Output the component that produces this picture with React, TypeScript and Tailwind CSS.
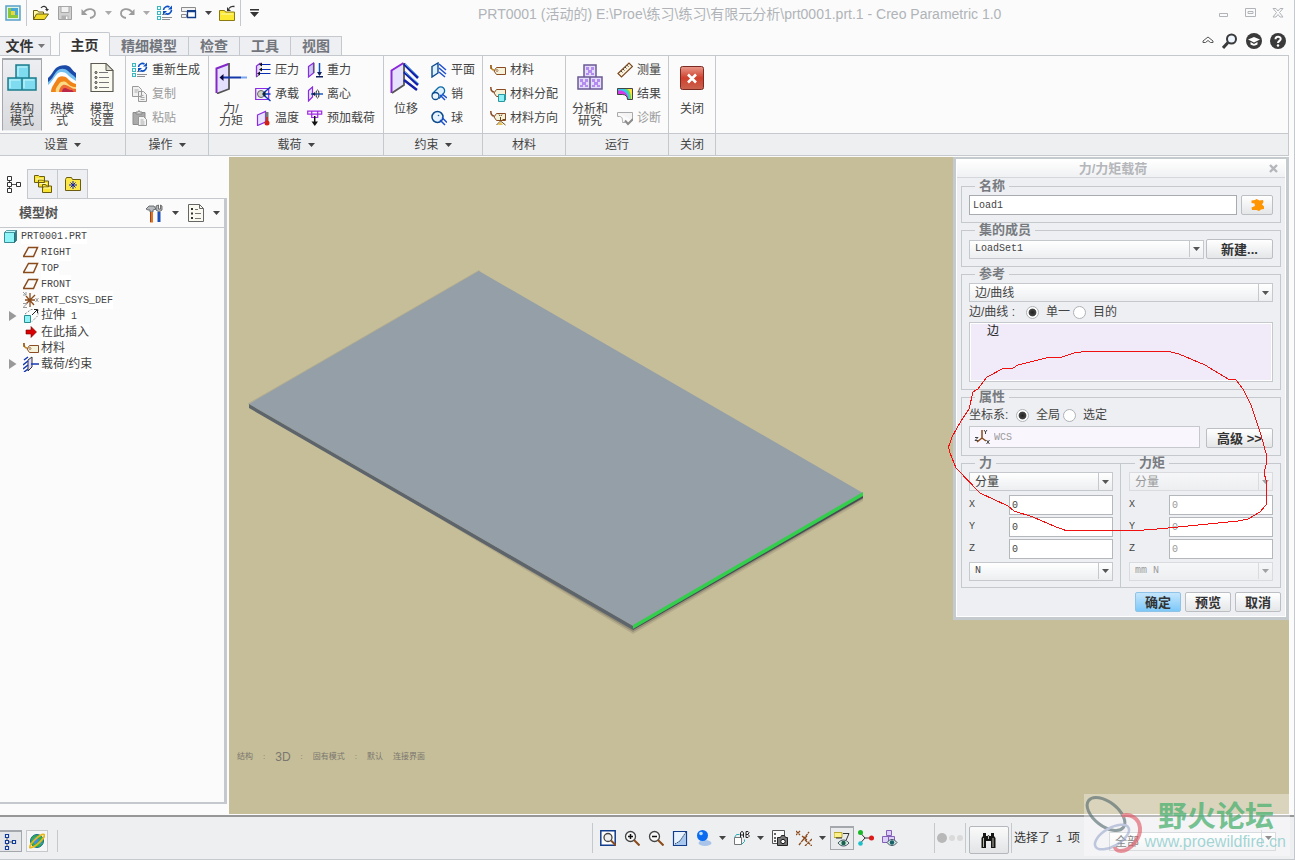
import type { ReactNode } from 'react';

type Kids = { children: ReactNode };

const LINE = 'border-[#c5c9cd]';

function Ico({ s = 16, v, children }: { s?: number; v?: number; children: ReactNode }) {
  const box = v ?? s;
  return (
    <svg width={s} height={s} viewBox={`0 0 ${box} ${box}`} fill="none" className="shrink-0" aria-hidden="true">
      {children}
    </svg>
  );
}

function Caret({ color = '#444' }: { color?: string }) {
  return (
    <svg width="7" height="4" viewBox="0 0 7 4" className="shrink-0" aria-hidden="true">
      <path d="M0 0h7L3.5 4z" fill={color} />
    </svg>
  );
}

/* ---------- shared small icons ---------- */

const Regen = () => (
  <Ico>
    <g shapeRendering="crispEdges">
      <path d="M.5 1.500h3v3h-3zM.5 6.500h3v3h-3zM.5 11.500h3v3h-3z" stroke="#3fb6bd" fill="#dff" />
      <path d="M5 9.500h4M5 12.500h10M5 14.500h8" stroke="#8b8f93" />
    </g>
    <path d="M6.500 5a4 4 0 0 1 6-3M14.500 5a4 4 0 0 1-6 3.500" stroke="#0a4fc4" strokeWidth="1.600" />
    <path d="M11 4.500h4V.5zM10 6H6v4z" fill="#0a4fc4" />
  </Ico>
);
const Copy = () => (
  <Ico>
    <path d="M.5.5h6l3 3v7h-9zM6.500 5.500h5l3 3v7h-8z" fill="#f1f1f1" stroke="#999" />
    <path d="M2.500 4h4M2.500 6h3M8.500 9.500h3M8.500 11.500h4M8.500 13.500h4" stroke="#aaa" />
  </Ico>
);
const Paste = () => (
  <Ico>
    <path d="M1 2.500h12v12H1z" fill="#aaa" stroke="#8d8d8d" />
    <path d="M4 4V2h2l1-1.500L8 2h2v2z" fill="#ddd" stroke="#888" />
    <path d="M6.500 6.500h5l3 3v6h-8z" fill="#f4f4f4" stroke="#999" />
    <path d="M8.500 10h3M8.500 12h4M8.500 14h4" stroke="#aaa" />
  </Ico>
);
const Tag = () => (
  <Ico>
    <path d="M.8 3c0 3 .8 5 3.500 5" stroke="#c08a1c" strokeWidth="1.500" />
    <path d="M1 3v4" stroke="#7a3b12" />
    <path d="M6.500 5.500h9v7h-9L4 9z" fill="#f5f2dc" stroke="#8a4b22" />
    <circle cx="7" cy="8.500" r="1" fill="#fff" stroke="#8a4b22" strokeWidth=".7" />
  </Ico>
);
const TagAssign = () => (
  <Ico>
    <path d="M.8 1c0 3 .8 5 3.500 5" stroke="#8a4b22" strokeWidth="1.500" />
    <path d="M6.500 3.500h9v7h-9L4 7z" fill="#f5f2dc" stroke="#8a4b22" />
    <path d="M8.500 8.500h6v7h-6z" fill="#8ff0f5" stroke="#2b98a0" />
    <path d="M14.500 8.500l1.500-1v6l-1.500 2z" fill="#2b98a0" />
  </Ico>
);
const TagOrient = () => (
  <Ico>
    <path d="M.8 1c0 3 .8 5 3.500 5" stroke="#8a4b22" strokeWidth="1.500" />
    <path d="M6.500 3.500h9v7h-9L4 7z" fill="#f5f2dc" stroke="#8a4b22" />
    <path d="M10.500 11V7M10.500 11l-4 4M10.500 11l5 4M10 6l-1-1.500M11 6l1-1.500M12.500 9.500l3 0" stroke="#6b4a1c" />
    <path d="M10 11.500l3 3.500H8z" fill="#e6c350" />
  </Ico>
);
const Pressure = () => (
  <Ico>
    <path d="M2 4.500L5.500 1v10.500L2 15z" fill="#e3dcff" />
    <path d="M1.500 15V4L5.500 1" stroke="#8a2be2" strokeWidth="1.300" />
    <path d="M1.500 15l4-3.500" stroke="#555" />
    <path d="M5 2.500h10.500M5 7.500h10.500M3 11.500h12.500" stroke="#0a2bb4" strokeWidth="1.200" />
    <path d="M4 2.500l3-2v4zM4 7.500l3-2v4zM2 11.500l3-2v4z" fill="#111" />
  </Ico>
);
const Bearing = () => (
  <Ico>
    <path d="M.7 2.500h13v11H.7z" fill="#f2edff" stroke="#8a2be2" strokeWidth="1.200" />
    <circle cx="6" cy="8" r="3.500" fill="#cfd3c4" stroke="#666" />
    <path d="M15.500 1L8 7.500M15.500 8H8M15.500 15L8 8.500" stroke="#0a3cc4" strokeWidth="1.400" />
    <path d="M7 8l3.500-3v6z" fill="#123" />
  </Ico>
);
const Temp = () => (
  <Ico>
    <path d="M2.500 5l8-3.500V12l-8 3.500z" fill="#e8e3ff" stroke="#8a2be2" strokeWidth="1.200" />
    <path d="M12 2v10" stroke="#777" strokeWidth="3" />
    <path d="M12 7v5" stroke="#d42010" strokeWidth="1.500" />
    <circle cx="12" cy="13" r="2.500" fill="#d42010" />
  </Ico>
);
const Gravity = () => (
  <Ico>
    <path d="M1.500 4.500l5-3.500v10l-5 4z" fill="#c9c9ee" stroke="#8a2be2" strokeWidth="1.200" />
    <path d="M7 1v10" stroke="#555" />
    <path d="M12.500 1v12" stroke="#0a4fc4" strokeWidth="1.500" />
    <path d="M10 10h5l-2.500 4zM9 14h7v1.500H9z" fill="#102060" />
  </Ico>
);
const Centrifugal = () => (
  <Ico>
    <path d="M1.500 4.500L5.500 1v10l-4 4z" fill="#e8e3ff" stroke="#8a2be2" strokeWidth="1.200" />
    <path d="M4 8h12" stroke="#0a4fc4" strokeWidth="1.400" />
    <ellipse cx="10.500" cy="8" rx="1.500" ry="4" stroke="#333" />
    <path d="M5 8l3-2v4z" fill="#123" />
  </Ico>
);
const Preload = () => (
  <Ico>
    <path d="M.7 1.200h14v3H.7zM4.700 4.500v3h6v-3M4.700 1v3M10.700 1v3" stroke="#a02be2" strokeWidth="1.200" fill="#f7eeff" />
    <path d="M7.700 6v6" stroke="#111" strokeWidth="1.500" />
    <path d="M4.500 11.500h6.500l-3.200 4.500z" fill="#111" />
  </Ico>
);
const hatch = <path d="M8 2l7 6M8 6l7 6M8 10l6 5" stroke="#1d4fd0" strokeWidth="1.500" />;
const Plane = () => (
  <Ico>
    <path d="M1 4.500L7 1v10l-6 4z" fill="#dff0ff" stroke="#0d4a8c" strokeWidth="1.400" />
    {hatch}
  </Ico>
);
const Pin = () => (
  <Ico>
    <path d="M1 8l6-6a3.800 3.800 0 1 1 5.500 5.500L8 12.500" fill="#dff0ff" stroke="#0d6aa8" strokeWidth="1.300" />
    <circle cx="4.500" cy="10" r="3.500" fill="#eef7ff" stroke="#0d4a8c" strokeWidth="1.300" />
    <path d="M9 9l5 5M11 8l5 4" stroke="#1d4fd0" strokeWidth="1.500" />
  </Ico>
);
const Ball = () => (
  <Ico>
    <circle cx="6.500" cy="7" r="5.500" fill="#e6f3ff" stroke="#0d4a8c" strokeWidth="1.500" />
    <circle cx="7.500" cy="5.500" r=".8" fill="#0d6aa8" />
    <path d="M9 10l5 5M11 7.500l5 5" stroke="#1d4fd0" strokeWidth="1.500" />
  </Ico>
);
const Ruler = () => (
  <Ico>
    <path d="M1 11.500L12 1l3.500 3.500L4.500 15z" fill="#fbf3dc" stroke="#7a4a22" strokeWidth="1.200" />
    <path d="M4 9l1.500 1.500M6 7l1.500 1.500M8 5l1.500 1.500M10 3.200l1.500 1.500" stroke="#444" />
  </Ico>
);
const Result = () => (
  <Ico>
    <path d="M.5 2.500h15v11h-5c0-3-2-5-5-5h-5z" fill="#ffe23a" />
    <path d="M.5 2.500h8c4 1 6 5 5.500 11h-3.500c0-3-2-5-5-5h-5z" fill="#5be06a" />
    <path d="M.5 2.500h5c5 1 7 5 7 11h-2c0-3-2-5-5-5h-5z" fill="#39c6ef" />
    <path d="M.5 4.500h4c4 1 6.500 4 7 9h-1c0-3-2-5-5-5h-5z" fill="#d43ae8" />
    <path d="M.5 2.500h15v11h-5c0-3-2-5-5-5h-5z" stroke="#444" />
  </Ico>
);
const Diagnose = () => (
  <Ico>
    <path d="M.5 2.500h15v8M.5 2.500v4h2c3 0 3 3 3 6h3" fill="#f4f4f4" stroke="#aaa" />
    <path d="M8 10.500l3 3.500 5-5" stroke="#8b8b8b" strokeWidth="2" />
  </Ico>
);

/* ---------- large ribbon icons ---------- */

const Blocks = () => (
  <Ico s={32}>
    <g fill="#7fdcf0" stroke="#1c7c8c" strokeWidth="1.500">
      <path d="M10 3h13v13H10zM2 16h14v12H2zM16 16h14v12H16z" />
    </g>
    <path d="M12 14V5h9M4 26v-8h10M18 26v-8h10" stroke="#c9f5fc" strokeWidth="1.200" />
  </Ico>
);
const Thermal = () => (
  <Ico s={32}>
    <path d="M2 16c3-2 5-7 8-10s11-4 14-1 3 4 6 6v19H2z" fill="#1c4aa8" />
    <path d="M2 20c4-2 6-8 9-11s8-3 11 0 5 4 8 7v14H2z" fill="#74c0ee" />
    <path d="M2 23c4-3 6-8 9-11s8-2 10 0 5 5 9 7v11H2z" fill="#fdfdfd" />
    <path d="M5 30c0-5 4-9 6-13s8-3 10-1 5 5 9 6v8z" fill="#f08418" />
    <path d="M10 30c-1-3 1-5 3-8s6-3 8-1 4 4 9 4v5z" fill="#fbdc84" />
    <path d="M13 30c0-3 2-6 4-7s5 1 7 2 3 2 6 2v3z" fill="#ee6c34" />
    <path d="M16 30c0-2 1-4 3-4s3 2 7 2l2 2z" fill="#bc2848" />
  </Ico>
);
const Sheet = () => (
  <Ico s={32}>
    <path d="M5 1.500h15l7 7v21H5z" fill="#fbfaf0" stroke="#5c5a50" strokeWidth="1.200" />
    <path d="M20 1.500v7h7z" fill="#dcdcd0" stroke="#5c5a50" />
    <g stroke="#333">
      <circle cx="10" cy="10.500" r="1" /><circle cx="10" cy="15.500" r="1" /><circle cx="10" cy="20.500" r="1" /><circle cx="10" cy="25.500" r="1" />
    </g>
    <path d="M13 10.500h9M13 15.500h10M13 20.500h10M13 25.500h10" stroke="#777" />
  </Ico>
);
const Force = () => (
  <Ico s={32}>
    <path d="M1.500 6.500l12-4.500v25l-12 5z" fill="#e6e0ff" />
    <path d="M1.500 31V6.500L13.500 2" stroke="#8428c8" strokeWidth="2" />
    <path d="M14 1v26L2 31.500" stroke="#555" strokeWidth="1.800" />
    <path d="M6 15.500h20" stroke="#1438a8" strokeWidth="2" />
    <path d="M26 15.500h6" stroke="#7aa8f0" strokeWidth="2" />
    <path d="M4.500 15.500l4-3.500v7z" fill="#0a0a40" />
  </Ico>
);
const Displace = () => (
  <Ico s={32}>
    <path d="M1.500 8.500l12-7.500v22l-12 8z" fill="#e6e0ff" />
    <path d="M1.500 31V8.500l12-7.500" stroke="#8a28d8" strokeWidth="2" />
    <path d="M14 1v22L2 31" stroke="#555" strokeWidth="1.800" />
    <path d="M14 2l14 14M14 10l14 13M14 18l13 10" stroke="#1420a8" strokeWidth="2.500" />
    <path d="M15 2l14 13M15 10l14 12" stroke="#5ab0f0" />
  </Ico>
);
const Study = () => (
  <Ico s={32}>
    <g fill="#e4dcfc" stroke="#6b5a94" strokeWidth="1.500">
      <path d="M10 3h12v12H10zM4 15h12v12H4zM16 15h12v12H16z" />
    </g>
    <g fill="#b48cf0">
      <path d="M12 5h3v3h-3zM17 5h3v3h-3zM14 8h4v3h-4zM12 11h3v2h-3zM17 11h3v2h-3zM6 17h3v3H6zM11 17h3v3h-3zM8 20h4v3H8zM6 23h3v2H6zM11 23h3v2h-3zM18 17h3v3h-3zM23 17h3v3h-3zM20 20h4v3h-4zM18 23h3v2h-3zM23 23h3v2h-3z" />
    </g>
  </Ico>
);
const CloseBig = () => (
  <Ico s={32}>
    <defs>
      <linearGradient id="closeRed" x1="0" y1="0" x2="0" y2="1">
        <stop offset="0" stopColor="#e89a8c" /><stop offset=".5" stopColor="#d0402c" /><stop offset="1" stopColor="#c86450" />
      </linearGradient>
    </defs>
    <rect x="4.500" y="4.500" width="23" height="23" rx="2" fill="url(#closeRed)" stroke="#7a2a20" />
    <path d="M12 12.500l8 8M20 12.500l-8 8" stroke="#fff" strokeWidth="2.600" />
  </Ico>
);

/* ---------- ribbon pieces ---------- */

function Big({ icon, lines, pressed, w = 'w-10' }: { icon: ReactNode; lines: string[]; pressed?: boolean; w?: string }) {
  return (
    <button
      className={`flex h-[73px] flex-col items-center text-xs leading-3 ${w} ${
        pressed ? 'border border-t-2 border-[#a4a8ac] border-b-transparent bg-linear-to-b from-[#eceef1] to-[#d8dadd] pt-0.5' : 'pt-1'
      }`}
    >
      {icon}
      <span className="mt-[9px] block">
        {lines.map((l) => (
          <span key={l} className="block whitespace-nowrap">{l}</span>
        ))}
      </span>
    </button>
  );
}

function Small({ icon, text, off }: { icon: ReactNode; text: string; off?: boolean }) {
  return (
    <button disabled={off} className={`flex h-6 items-center gap-1 text-xs whitespace-nowrap ${off ? 'text-[#9a9a9a]' : ''}`}>
      {icon}
      {text}
    </button>
  );
}

const Col = ({ children }: Kids) => <div className="flex flex-col">{children}</div>;

function Group({ label, menu, w, children }: { label: string; menu?: boolean; w: string; children: ReactNode }) {
  return (
    <section className={`flex shrink-0 flex-col border-r ${LINE} ${w}`}>
      <div className="flex h-[77px] items-start pt-0.5">{children}</div>
      <div className={`flex h-[22px] items-center justify-center gap-1.5 border-t ${LINE} bg-[#eeeff1] text-xs`}>
        {label}
        {menu && <Caret />}
      </div>
    </section>
  );
}

function QuickBar() {
  const slot = 'flex w-6 shrink-0 items-center justify-center';
  const drop = 'flex w-3.5 shrink-0 items-center justify-center';
  return (
    <div className="flex h-[26px] items-stretch">
      <div className={`mr-0.5 flex w-[27px] items-center justify-center border-r ${LINE}`}>
        <Ico>
          <path d="M1 1h14v14H1z" fill="#dff4e4" stroke="#5aa0c8" strokeWidth="1.500" />
          <path d="M3 3h3v7h7v3H3z" fill="#8cc63c" />
          <path d="M6 3h7v7H6z" fill="#4aa8d8" />
          <path d="M6 6h4v4H6z" fill="#e8d83c" />
        </Ico>
      </div>
      <button className={slot} aria-label="打开">
        <Ico>
          <path d="M.5 14.500v-9h4l1 1.500h5v2" fill="#fff9a8" stroke="#6b5c10" />
          <path d="M.5 14.500l3-5.500h12l-4 5.500z" fill="#f0dc28" stroke="#6b5c10" />
          <path d="M8 3c2-2.500 5-2 6 1" stroke="#333" strokeWidth="1.200" /><path d="M12 4h4l-2 2.500z" fill="#333" />
        </Ico>
      </button>
      <button className={slot} aria-label="保存">
        <Ico>
          <path d="M1.500 1.500h13v13h-13z" fill="#d0d0d0" stroke="#a0a0a0" /><path d="M4 1.500h8v6H4z" fill="#f2f2f2" stroke="#a8a8a8" /><path d="M4.500 10.500h7v4h-7z" fill="#b0b0b0" /><path d="M9 11.500h1.500v2.500H9z" fill="#fff" />
        </Ico>
      </button>
      <button className={slot} aria-label="撤消">
        <Ico><path d="M3 7c4-5 11-3 11 1.500 0 3-2 4-5 4.500" stroke="#9c9c9c" strokeWidth="1.800" /><path d="M.5 4v6h6z" fill="#9c9c9c" /></Ico>
      </button>
      <span className={drop}><Caret color="#aaa" /></span>
      <button className={slot} aria-label="重做">
        <Ico><path d="M13 7C9 2 2 4 2 8.500c0 3 2 4 5 4.500" stroke="#9c9c9c" strokeWidth="1.800" /><path d="M15.500 4v6h-6z" fill="#9c9c9c" /></Ico>
      </button>
      <span className={drop}><Caret color="#aaa" /></span>
      <button className={slot} aria-label="重新生成"><Regen /></button>
      <button className={slot} aria-label="窗口">
        <Ico>
          <path d="M.5 2.500h14v4H.5zM.5 9.500h5v3h-5z" fill="#f3f3f3" stroke="#8b8b8b" />
          <path d="M6.500 6.500h8v6h-8z" fill="#fff" stroke="#123c8c" strokeWidth="1.300" /><path d="M6 6h9" stroke="#123c8c" strokeWidth="2" />
        </Ico>
      </button>
      <span className={drop}><Caret /></span>
      <button className={slot} aria-label="关闭窗口">
        <Ico>
          <path d="M.5 15.500v-10h5l1 1.500h9v8.500z" fill="#fbe932" stroke="#8a7a10" /><path d="M2 9h12" stroke="#fff9b0" />
          <path d="M10 3.500c1-2 3-2.500 5.500-2" stroke="#333" strokeWidth="1.300" /><path d="M8 2v4h4z" fill="#333" />
        </Ico>
      </button>
      <span className={`ml-px w-px border-l ${LINE}`} />
      <button className="flex w-[26px] items-center justify-center" aria-label="自定义">
        <svg width="9" height="8" viewBox="0 0 9 8" aria-hidden="true"><path d="M0 0h9v1.500H0zM0 3h9L4.500 8z" fill="#333" /></svg>
      </button>
    </div>
  );
}

function TitleBar() {
  return (
    <header className="relative flex h-[27px] items-start justify-between">
      <QuickBar />
      <h1 className="mr-auto ml-[211px] pt-1 text-sm leading-5 whitespace-nowrap text-[#b0b4b8]">
        PRT0001 (活动的) E:\Proe\练习\练习\有限元分析\prt0001.prt.1 - Creo Parametric 1.0
      </h1>
      <div className="flex items-center gap-[15px] pt-[7px] pr-2.5">
        <button aria-label="最小化"><Ico s={12}><path d="M1.500 6.500h8v3h-8z" stroke="#b0b4b8" /></Ico></button>
        <button aria-label="还原"><Ico s={12}><path d="M.5 1.500h10v8H.5zM3 4.500h5v2H3z" stroke="#b0b4b8" /></Ico></button>
        <button aria-label="关闭"><Ico s={12}><path d="M1 1.500h3l2 2.500 2-2.500h3L7.500 5.500 11 10H8L6 7.500 4 10H1l3.500-4.500z" stroke="#b0b4b8" /></Ico></button>
      </div>
    </header>
  );
}

function TabRow() {
  const tab = `flex h-5 items-center justify-center border-t border-r border-b ${LINE} bg-[#eeeff2] text-sm leading-none font-bold whitespace-nowrap`;
  return (
    <nav className="mr-[5px] flex h-[29px] items-end text-[#72767c]">
      <button className={`${tab} w-[51px] gap-1 text-[#333]`}>
        文件 <Caret color="#777" />
      </button>
      <span className={`h-px w-2 border-b ${LINE}`} />
      <button className={`flex h-6 w-[51px] items-center justify-center rounded-t-xs border-x border-t ${LINE} text-sm leading-none font-bold text-[#333]`}>主页</button>
      <button className={`${tab} w-[79px]`}>精细模型</button>
      <button className={`${tab} w-[51px]`}>检查</button>
      <button className={`${tab} w-[51px]`}>工具</button>
      <button className={`${tab} w-[51px]`}>视图</button>
      <div className={`flex h-full flex-1 items-center justify-end gap-2 border-b ${LINE} pr-[3px]`}>
        <button aria-label="收起功能区"><Ico s={12}><path d="M1 6l5-4 5 4v1.500H8.500L6 5.500 3.500 7.500H1z" stroke="#555" /></Ico></button>
        <button aria-label="搜索"><Ico><circle cx="9.500" cy="6" r="4.500" fill="#eef6ff" stroke="#3a3a3a" strokeWidth="2" /><path d="M6 9.500L1 15" stroke="#3a3a3a" strokeWidth="3" /></Ico></button>
        <button aria-label="学习"><Ico><circle cx="8" cy="8" r="8" fill="#3a3a3a" /><path d="M2 6.500L8 4l6 2.500L8 9.500zM4.500 9v2.500c2 1.500 5 1.500 7 0V9L8 11z" fill="#fff" /></Ico></button>
        <button aria-label="帮助"><Ico><circle cx="8" cy="8" r="8" fill="#3a3a3a" /><path d="M5.500 6.200C5.500 3 10.700 3 10.700 6c0 1.800-2.700 2-2.700 4" stroke="#fff" strokeWidth="2" /><circle cx="8" cy="12.500" r="1.200" fill="#fff" /></Ico></button>
      </div>
    </nav>
  );
}

function Ribbon() {
  return (
    <div className={`mr-[5px] flex border-r border-b ${LINE} text-[#444]`}>
      <Group label="设置" menu w="w-[126px]">
        <div className="flex pl-0.5">
          <Big icon={<Blocks />} lines={['结构', '模式']} pressed />
          <Big icon={<Thermal />} lines={['热模', '式']} />
          <Big icon={<Sheet />} lines={['模型', '设置']} />
        </div>
      </Group>
      <Group label="操作" menu w="w-[83px]">
        <div className="pl-1.5">
          <Col>
            <Small icon={<Regen />} text="重新生成" />
            <Small icon={<Copy />} text="复制" off />
            <Small icon={<Paste />} text="粘贴" off />
          </Col>
        </div>
      </Group>
      <Group label="载荷" menu w="w-[175px]">
        <div className="flex pl-0.5">
          <Big icon={<Force />} lines={['力/', '力矩']} />
          <div className="ml-1 flex gap-2">
            <Col>
              <Small icon={<Pressure />} text="压力" />
              <Small icon={<Bearing />} text="承载" />
              <Small icon={<Temp />} text="温度" />
            </Col>
            <Col>
              <Small icon={<Gravity />} text="重力" />
              <Small icon={<Centrifugal />} text="离心" />
              <Small icon={<Preload />} text="预加载荷" />
            </Col>
          </div>
        </div>
      </Group>
      <Group label="约束" menu w="w-[99px]">
        <div className="flex gap-[5px] pl-0.5">
          <Big icon={<Displace />} lines={['位移']} />
          <Col>
            <Small icon={<Plane />} text="平面" />
            <Small icon={<Pin />} text="销" />
            <Small icon={<Ball />} text="球" />
          </Col>
        </div>
      </Group>
      <Group label="材料" w="w-[83px]">
        <div className="pl-[7px]">
          <Col>
            <Small icon={<Tag />} text="材料" />
            <Small icon={<TagAssign />} text="材料分配" />
            <Small icon={<TagOrient />} text="材料方向" />
          </Col>
        </div>
      </Group>
      <Group label="运行" w="w-[103px]">
        <div className="flex gap-[7px] pl-1">
          <Big icon={<Study />} lines={['分析和', '研究']} />
          <Col>
            <Small icon={<Ruler />} text="测量" />
            <Small icon={<Result />} text="结果" />
            <Small icon={<Diagnose />} text="诊断" off />
          </Col>
        </div>
      </Group>
      <Group label="关闭" w="w-[47px]">
        <Big icon={<CloseBig />} lines={['关闭']} w="w-full" />
      </Group>
      <div className="flex flex-1 flex-col justify-end">
        <div className={`h-[22px] border-t ${LINE} bg-[#eeeff1]`} />
      </div>
    </div>
  );
}

/* ---------- model tree ---------- */

const Datum = () => <Ico><path d="M5.500 3.500h9l-4 9h-10z" stroke="#8a4b1c" strokeWidth="1.500" /></Ico>;
const Csys = () => (
  <Ico>
    <path d="M7 1v14M3 4l8 9M3 12l9-9M2 8h10" stroke="#8a4b1c" strokeWidth="1.300" />
    <path d="M0 0l3 3M3 0v3H0M12.500 6l3 4M15.500 6l-3 4M0 11.500h4l-4 4h4" stroke="#999" />
  </Ico>
);
const Extrude = () => (
  <Ico>
    <path d="M1.500 7.500h6v7h-6z" fill="#8ff4f8" stroke="#2b8c90" />
    <path d="M2 6l6-4.500h7v6l-6 6" stroke="#888" strokeDasharray="2 1.500" /><path d="M9 7l5-5M11 1.500h3.500V5" stroke="#222" />
  </Ico>
);
const InsertHere = () => <Ico><path d="M3 6h5V2.500L13.500 8 8 13.500V10H3z" fill="#d80000" stroke="#700" strokeWidth=".6" /></Ico>;
const LoadIcon = () => (
  <Ico>
    <path d="M5 4l4-3v10l-4 4z" fill="#e0dcff" stroke="#333" /><path d="M1 4l4-3M0 9l5-4M0 13l5-4M1 16l4-3" stroke="#1438b0" strokeWidth="1.500" /><path d="M8 8h8" stroke="#1438b0" strokeWidth="1.500" />
  </Ico>
);

const NODES: { icon: ReactNode; cjk?: string; latin?: string; open?: boolean }[] = [
  { icon: <Datum />, latin: 'RIGHT' },
  { icon: <Datum />, latin: 'TOP' },
  { icon: <Datum />, latin: 'FRONT' },
  { icon: <Csys />, latin: 'PRT_CSYS_DEF' },
  { icon: <Extrude />, cjk: '拉伸', latin: ' 1', open: true },
  { icon: <InsertHere />, cjk: '在此插入' },
  { icon: <Tag />, cjk: '材料' },
  { icon: <LoadIcon />, cjk: '载荷/约束', open: true },
];

const mono = "font-['Liberation_Mono','Noto_Sans_CJK_SC',monospace] text-[10px]";

function Sidebar() {
  return (
    <aside className="flex w-[227px] shrink-0 flex-col pt-[13px] pb-[11px]">
      <div className="flex h-[30px]">
        <button aria-label="模型树" className="flex w-[27px] items-center justify-center">
          <Ico s={18}>
            <path d="M4.500 3v12M6 9.500h6" stroke="#555" />
            <path d="M2.500 1.500h4v4h-4zM2.500 7.500h4v4h-4zM2.500 13.500h4v4h-4zM11.500 7.500h4v4h-4z" fill="#fff" stroke="#333" />
          </Ico>
        </button>
        <button aria-label="文件夹浏览器" className={`flex w-[31px] items-center justify-center border ${LINE} bg-[#eeeff2]`}>
          <Ico s={20}>
            <g fill="#f7e332" stroke="#6b5c10">
              <path d="M1.500 8.500v-7h4l1 1h5v6zM5.500 13v-7h4l1 1h5v6zM9.500 18.500v-8h3l1 1.500h5v6.500z" />
            </g>
            <path d="M3 5h7M7 9.500h7M11 14h6" stroke="#fffbb8" />
          </Ico>
        </button>
        <button aria-label="收藏夹" className={`flex w-[30px] items-center justify-center border-y border-r ${LINE} bg-[#eeeff2]`}>
          <Ico s={18}>
            <path d="M1.500 15.500v-11l1-2h5l1 2h8v11z" fill="#fbe74a" stroke="#6b5c10" />
            <path d="M9 6v8M5 10h8M6.500 7.500l5 5M11.500 7.500l-5 5" stroke="#1020b0" />
          </Ico>
        </button>
        <div className={`flex-1 border-b ${LINE}`} />
      </div>
      <div className={`flex flex-1 flex-col border-r-3 border-b-2 ${LINE}`}>
        <div className={`flex h-[29px] items-center border-b ${LINE} pr-1 pl-[19px]`}>
          <h2 className="mr-auto text-[13px] font-bold text-[#555]">模型树</h2>
          <button aria-label="设置" className="flex items-center gap-2">
            <Ico s={19}>
              <path d="M1 5l3-3h5l2 3-3 1v2H5V6H3z" fill="#b4babe" stroke="#555" strokeWidth=".8" /><path d="M5 8h3v10.500H5z" fill="#e8701c" />
              <path d="M5 8h1v10H5z" fill="#8a4b22" />
              <path d="M12.500 8h3v10h-3z" fill="#1c50b8" /><path d="M11 2v4l3 2 3-2V2l-1.500-1v4h-2V1z" fill="#b4babe" stroke="#555" strokeWidth=".8" />
            </Ico>
            <Caret />
          </button>
          <button aria-label="显示" className="ml-2 flex items-center gap-2">
            <Ico s={18}>
              <path d="M1.500 .5h11l4 4v13h-15z" fill="#fbfaf0" stroke="#666" /><path d="M12.500.5v4h4" stroke="#666" />
              <path d="M4 5h2M4 9.500h2M4 14h2" stroke="#333" strokeWidth="2" /><path d="M8 5.500h3M8 9.500h6M8 14.500h6" stroke="#777" />
            </Ico>
            <Caret />
          </button>
        </div>
        <div className="flex h-4 items-center gap-1 pl-1 text-[#444]">
          <Ico s={13}><path d="M.5 2.500h10v10H.5z" fill="#8ff4f8" stroke="#3a8c94" /><path d="M10.500 2.500l2-2v10l-2 2z" fill="#2b7f88" stroke="#2b6c74" strokeWidth=".8" /><path d="M.5 2.500l2-2h10l-2 2z" fill="#c8fbff" stroke="#3a8c94" strokeWidth=".8" /></Ico>
          <span className={`bg-white ${mono}`}>PRT0001.PRT</span>
        </div>
        <ul className="text-xs leading-4 text-[#444]">
          {NODES.map((n, i) => (
            <li key={i} className="flex h-4 items-center pl-[9px]">
              <span className="flex w-3.5 shrink-0">
                {n.open && <svg width="8" height="10" viewBox="0 0 8 10" aria-hidden="true"><path d="M0 0l7.500 5L0 10z" fill="#999" /></svg>}
              </span>
              {n.icon}
              <span className="ml-0.5 bg-white leading-4 whitespace-pre">
                {n.cjk}
                {n.latin && <span className={mono}>{n.latin}</span>}
              </span>
            </li>
          ))}
        </ul>
      </div>
    </aside>
  );
}

/* ---------- load dialog ---------- */

function Box({ title, className = '', children }: { title: string; className?: string; children: ReactNode }) {
  return (
    <fieldset className={`min-w-0 border ${LINE} px-[7px] pb-[7px] ${className}`}>
      <legend className="ml-1.5 px-1 text-[13px] leading-[14px] font-bold text-[#777b80]">{title}</legend>
      {children}
    </fieldset>
  );
}

function Select({ value, label, latin, off, className = '' }: { value: string; label: string; latin?: boolean; off?: boolean; className?: string }) {
  return (
    <div className={`relative h-[19px] ${off ? 'opacity-50' : ''} ${className}`}>
      <select
        aria-label={label}
        disabled={off}
        className={`h-full w-full appearance-none border ${LINE} bg-linear-to-b from-white to-[#eceef0] pl-[5px] leading-4 text-[#444] ${latin ? mono : 'text-xs'}`}
      >
        <option>{value}</option>
      </select>
      <span className={`pointer-events-none absolute inset-y-px right-px flex w-3.5 items-center justify-center border-l ${LINE}`}>
        <Caret color="#555" />
      </span>
    </div>
  );
}

function PushButton({ children, className = '', label, primary }: { children: ReactNode; className?: string; label?: string; primary?: boolean }) {
  return (
    <button
      aria-label={label}
      className={`flex h-5 shrink-0 items-center justify-center rounded-xs border text-[13px] leading-none font-bold whitespace-pre text-[#333] ${
        primary ? 'border-[#8fc4e8] bg-linear-to-b from-[#c4e6fc] to-[#7cc8f8]' : 'border-[#bbbfc3] bg-linear-to-b from-white to-[#e4e6e8]'
      } ${className}`}
    >
      {children}
    </button>
  );
}

function Radio({ name, text, on }: { name: string; text: string; on?: boolean }) {
  return (
    <label className="flex items-center gap-[7px]">
      <input
        type="radio"
        name={name}
        defaultChecked={on}
        className="size-[13px] appearance-none rounded-full border border-[#aeb2b6] bg-white checked:bg-[radial-gradient(circle,#222_0,#444_45%,#fff_55%)]"
      />
      {text}
    </label>
  );
}

function Components({ title, unit, off }: { title: string; unit: string; off?: boolean }) {
  return (
    <Box title={title} className={`flex-1 ${off ? 'border-l-0 pl-2!' : ''}`}>
      <Select value="分量" label={`${title} 类型`} off={off} className="mt-0.5" />
      <div className="mt-1 flex flex-col gap-0.5">
        {['X', 'Y', 'Z'].map((axis) => (
          <label key={axis} className={`flex h-5 items-center ${mono} text-[#444]`}>
            <span className="w-10">{axis}</span>
            <input
              defaultValue="0"
              disabled={off}
              className={`h-5 min-w-0 flex-1 border border-[#b4b8bc] bg-white px-0.5 ${off ? 'text-[#999]' : ''}`}
            />
          </label>
        ))}
      </div>
      <Select value={unit} label={`${title} 单位`} latin off={off} className="mt-0.5" />
    </Box>
  );
}

function LoadDialog() {
  return (
    <div role="dialog" aria-label="力/力矩载荷" className="absolute top-0 right-0 w-[336px] border-3 border-t-2 border-[#c5cacf] bg-[#eeeff2] text-xs text-[#444]">
      <div className="border border-white px-1 pb-1">
        <div className="-mx-1 flex h-[18px] items-center border-b border-[#d4d8dc] bg-linear-to-b from-white to-[#f0f1f3] pr-[7px]">
          <h2 className="flex-1 text-center text-[13px] leading-none font-bold text-[#b4b6ba]">力/力矩载荷</h2>
          <button aria-label="关闭对话框"><Ico s={9}><path d="M1 1l7 7M8 1L1 8" stroke="#b4b6ba" strokeWidth="2.400" /></Ico></button>
        </div>
        <Box title="名称" className="mt-px">
          <div className="mt-0.5 flex gap-1">
            <input aria-label="名称" defaultValue="Load1" className={`h-5 min-w-0 flex-1 border border-[#a8acb0] bg-white px-[3px] ${mono}`} />
            <PushButton className="w-8" label="颜色">
              <svg width="13" height="12" viewBox="0 0 13 12" aria-hidden="true">
                <path d="M.5 1.500L4 1l1.500-1 3 1.500L12 1l.5 2L11 5.500l2 2V10l-3 .5-2 1.500-2.500-1L1 11 .5 8.500 4 7 3.500 4.500.5 4z" fill="#ff9500" />
              </svg>
            </PushButton>
          </div>
        </Box>
        <Box title="集的成员">
          <div className="mt-0.5 flex gap-0.5">
            <Select value="LoadSet1" label="集的成员" latin className="flex-1" />
            <PushButton className="w-[67px]">新建...</PushButton>
          </div>
        </Box>
        <Box title="参考">
          <Select value="边/曲线" label="参考类型" className="mt-0.5" />
          <div className="flex h-5 items-center gap-[3px]">
            <span className="w-[54px] whitespace-pre">边/曲线 :</span>
            <Radio name="edge" text="单一" on />
            <Radio name="edge" text="目的" />
          </div>
          <ul className={`h-[60px] border ${LINE} bg-[#f0eaf9] pl-[17px] leading-4 text-[#222] outline-1 -outline-offset-2 outline-white`}>
            <li>边</li>
          </ul>
        </Box>
        <Box title="属性">
          <div className="flex h-[22px] items-center gap-[3px]">
            <span className="w-11">坐标系:</span>
            <Radio name="csys" text="全局" on />
            <Radio name="csys" text="选定" />
          </div>
          <div className="flex items-end gap-1.5">
            <div className={`flex h-[22px] flex-1 items-center gap-1 border ${LINE} bg-[#f9f6fe] pl-1`}>
              <Ico>
                <path d="M8 1v8M8 9l-5 4M8 9l4 3" stroke="#8a4b1c" strokeWidth="1.500" />
                <path d="M10 1l1.500 2L13 1M11.500 3v2M1 8.500h3l-3 3h3M12.500 11l3 4M15.500 11l-3 4" stroke="#444" />
              </Ico>
              <input aria-label="坐标系" disabled defaultValue="WCS" className={`h-full min-w-0 flex-1 bg-transparent text-[#999] ${mono}`} />
            </div>
            <PushButton className="w-[67px]">{'高级 >>'}</PushButton>
          </div>
        </Box>
        <div className="flex">
          <Components title="力" unit="N" />
          <Components title="力矩" unit="mm N" off />
        </div>
        <div className="mt-1 flex justify-end gap-1">
          <PushButton primary className="w-[46px]">确定</PushButton>
          <PushButton className="w-[46px]">预览</PushButton>
          <PushButton className="w-[46px]">取消</PushButton>
        </div>
      </div>
      <svg width="336" height="463" viewBox="953 157 336 463" className="pointer-events-none absolute -top-0.5 -left-[3px] overflow-visible" aria-hidden="true">
        <path
          d="M1169 351.500H1084L1074 353 1062 357H1050L1018 365 1013 368H1004L987 377 978 389 973 392 969 409 961 421 952 437 948.500 447 950 453 956 468 980 493 1008 506 1014 511 1033 517 1056 527 1066 530.500H1138L1163 528.500 1188 526 1218 523 1238 521 1248 519 1260 512 1266 505V480L1264 473 1266.500 463V455L1261 435 1251 405 1243 389 1236 380 1228 379 1205 365 1179 354z"
          fill="none" stroke="#f01010" shapeRendering="crispEdges"
        />
      </svg>
    </div>
  );
}

function Canvas() {
  return (
    <main className="relative my-px mr-[5px] ml-0.5 min-w-0 flex-1 bg-[#c6be98]">
      <svg className="absolute inset-0 size-full" aria-hidden="true">
        <path d="M20 248L404 477 634 344V337L404 469z" fill="#b3ab8b" />
        <path d="M20 248L404 475 634 342V337L404 469z" fill="#958e77" />
        <path d="M19 247L250 113.500 251 115z" fill="#aaa78f" stroke="#b4af92" />
        <path d="M20 247L250 114 634 336 404 469z" fill="#959fa7" />
        <path d="M20 247L404 469V473L20 251z" fill="#5d646b" />
        <path d="M404 473L634 341V337L404 470z" fill="#474b53" />
        <path d="M404 468L634 335V339L404 472z" fill="#33cf4c" />
      </svg>
      <p className="absolute bottom-[49px] left-2 flex items-center gap-2.5 text-[8px] leading-4 whitespace-nowrap text-[#7a7770]">
        <span>结构</span><span>:</span><span className="text-xs">3D</span><span>:</span><span>固有模式</span>
        <span>:</span><span>默认</span><span>连接界面</span>
      </p>
      <LoadDialog />
    </main>
  );
}

/* ---------- status bar ---------- */

function StatusBar() {
  const slot = 'flex w-6 shrink-0 items-center justify-center';
  const drop = 'flex w-3.5 shrink-0 items-center justify-center';
  const rule = `h-[30px] w-px border-l ${LINE}`;
  const lens = (
    <>
      <circle cx="6.500" cy="6.500" r="5" fill="#f8f8f8" stroke="#444" strokeWidth="1.300" />
      <path d="M10 10l5.500 5.500" stroke="#8a4b1c" strokeWidth="2" />
    </>
  );
  return (
    <footer className="relative flex h-11 items-center border-t-2 border-[#979797] bg-[#eeeff1] text-[#333]">
      <button aria-label="模型树" className="mt-1.5 flex h-[22px] w-[22px] items-center justify-center border border-t-2 border-l-0 border-[#a4a8ac] bg-[#e4e6e8]">
        <Ico><path d="M4 2v12M5 8h6" stroke="#555" /><path d="M2.500.5h3v3h-3zM2.500 6.500h3v3h-3zM2.500 12.500h3v3h-3zM9.500 6.500h3v3h-3z" fill="#fff" stroke="#123c9c" strokeWidth="1.200" /></Ico>
      </button>
      <button aria-label="浏览器" className={`mt-1.5 ml-1 flex h-[22px] w-[22px] items-center justify-center border ${LINE} bg-[#f6f6f6]`}>
        <Ico>
          <circle cx="8" cy="8" r="6.500" fill="#2fae4c" stroke="#176a8c" /><path d="M4 6l4-3 2 4-4 5z" fill="#3c8cf0" /><path d="M9 9l4-2-1 5z" fill="#3c8cf0" />
          <path d="M1 14.500C0 11 12 0 15 1.500S6 15.500 1 14.500z" stroke="#e8b818" strokeWidth="1.800" />
        </Ico>
      </button>
      <span className={`mt-1.5 ml-[9px] h-[22px] w-px border-l ${LINE}`} />
      <div className="flex-1" />
      <span className={`${rule} mr-[3px]`} />
      <button className={slot} aria-label="重新调整"><Ico><path d="M.8.8h14.400v14.400H.8z" fill="#fff" stroke="#123c8c" strokeWidth="1.500" /><circle cx="8" cy="7.500" r="4" fill="#eee" stroke="#444" strokeWidth="1.300" /><path d="M11 10.500l5 5" stroke="#8a4b1c" strokeWidth="2" /></Ico></button>
      <button className={slot} aria-label="放大"><Ico>{lens}<path d="M4 6.500h5M6.500 4v5" stroke="#111" strokeWidth="1.500" /></Ico></button>
      <button className={slot} aria-label="缩小"><Ico>{lens}<path d="M4 6.500h5" stroke="#111" strokeWidth="1.500" /></Ico></button>
      <button className={slot} aria-label="重画"><Ico><path d="M1.500 1.500h13v14h-13z" fill="#e8f2ff" stroke="#123c8c" strokeWidth="1.200" /><path d="M14 2l-6 8-6 5h12z" fill="#a8c8f0" /><path d="M3 14l5-3 6-9" stroke="#345" strokeDasharray="1.500 1" /></Ico></button>
      <button className={slot} aria-label="显示样式"><Ico><ellipse cx="9" cy="13" rx="6.500" ry="3" fill="#a8c4e8" /><circle cx="6.500" cy="5.500" r="5.500" fill="#0c6cf0" /><circle cx="5" cy="3.500" r="1.800" fill="#bfe0ff" /></Ico></button>
      <span className={drop}><Caret /></span>
      <button className={slot} aria-label="已命名视图">
        <Ico><path d="M.5 7.500h7v7h-7z" fill="#fff" stroke="#777" /><path d="M.5 7.500l2-3h3M7.500 14.500l3-3v-2" stroke="#2ba8b0" /><path d="M6.500 7.500V3l1-1.500h1L9.500 3v4.500M6.500 5h3M12 1.500v6M12 1.500h2l1 1-1 2h-2M14 4.500l1 1v1l-1 1h-2" stroke="#222" /></Ico>
      </button>
      <span className={drop}><Caret /></span>
      <button className={slot} aria-label="视图管理器">
        <Ico><path d="M.5.5h12v13H.5z" fill="#fafafa" stroke="#555" /><path d="M2 4h2M2 8h2M2 11h2" stroke="#333" strokeWidth="1.500" /><path d="M5.500 7.500h3l1-2h3l1 2h2v8h-10z" fill="#777" stroke="#222" /><circle cx="11" cy="11.500" r="2.200" fill="#fff" stroke="#111" /></Ico>
      </button>
      <button className={slot} aria-label="基准显示">
        <Ico><path d="M0 1l4 4M4 1L0 5M6 6l5 4M11 6L6 11M3 15L13 2M9 10l7 6M16 9l-7 7" stroke="#8a4b1c" strokeWidth="1.300" strokeDasharray="3 .7" /></Ico>
      </button>
      <span className={drop}><Caret /></span>
      <button className={`${slot} h-6 border border-t-2 border-[#a4a8ac] bg-[#e8eaec]`} aria-label="注释显示">
        <Ico><path d="M0 1.500h8v5H0z" fill="#fbf08a" stroke="#b8a830" /><path d="M8 7H2M9 2.500h6l-3 7" stroke="#333" /><path d="M4 12c3-4 8-4 11 0-3 4-8 4-11 0z" fill="#cfe8d8" stroke="#456" /><circle cx="9.500" cy="12" r="2.200" fill="#186050" /></Ico>
      </button>
      <button className={slot} aria-label="旋转中心">
        <Ico><path d="M2.500 3L7 8l-4.500 5M7 8h7" stroke="#333" /><circle cx="2.500" cy="2.500" r="2.500" fill="#1ab828" /><circle cx="2.500" cy="13.500" r="2.300" fill="#1cc0c8" /><circle cx="13.500" cy="8" r="2.500" fill="#e01818" /></Ico>
      </button>
      <button className={slot} aria-label="模拟显示">
        <Ico><path d="M4.500.5h5v5h-5zM.5 6.500h6v6h-6zM6.500 6.500h6v6h-6z" fill="#dccff8" stroke="#8460b8" /><path d="M5 12.500c3-4 7-4 10 0-3 4-7 4-10 0z" fill="#cfe8e0" stroke="#456" /><circle cx="10" cy="12.500" r="2.200" fill="#186068" /></Ico>
      </button>
      <span className={`${rule} ml-8`} />
      <span className="flex w-[30px] items-center justify-center gap-0.5">
        <i className="size-2.5 rounded-full bg-[#b8b8b8]" /><i className="size-1.5 rounded-full bg-[#dadada]" /><i className="size-1.5 rounded-full bg-[#dadada]" />
      </span>
      <span className={`${rule} mr-[3px]`} />
      <button aria-label="查找" className="mt-1 flex h-7 w-10 items-center justify-center rounded-xs border border-[#b4b8bc] bg-linear-to-b from-[#fafafa] to-[#e2e4e6]">
        <Ico s={17}>
          <path d="M3 1h3v3h1.500l1-1 1 1H11V1h3v3l1.500 2v10H11V9H6v7H1.500V6L3 4z" fill="#151515" />
          <path d="M3.500 6v9M13 6v9M8.500 4v3" stroke="#b8b8a8" />
        </Ico>
      </button>
      <span className={`${rule} ml-0.5`} />
      <span className="ml-0.5 text-xs whitespace-pre">选择了<span className={mono}>{' 1 '}</span>项</span>
      <span className="mr-[18px] ml-[29px] flex w-[167px]"><Select value="全部" label="过滤器" className="w-full" /></span>
      <Watermark />
    </footer>
  );
}

function Watermark() {
  return (
    <div className="pointer-events-none absolute right-1 bottom-[3px] h-[62px] w-[206px] bg-white/35">
      <svg width="60" height="62" viewBox="0 0 60 62" fill="none" className="absolute top-0 left-0 opacity-60" aria-hidden="true">
        <ellipse cx="22" cy="20" rx="22" ry="12" transform="rotate(38 22 20)" stroke="#4c6468" strokeWidth="3" />
        <ellipse cx="28" cy="43" rx="19" ry="9" transform="rotate(-30 28 43)" stroke="#9aa8cc" strokeWidth="2.500" />
        <path d="M38 22c8-3 17 2 18 12S46 57 37 57c-4 0-6-2-6-4" stroke="#e05060" strokeWidth="4" />
      </svg>
      <div className="flex h-full flex-col items-end justify-between pt-1 pr-4 pb-1">
        <p className="font-['Noto_Sans_CJK_SC',sans-serif] text-[29px] leading-8 font-bold whitespace-nowrap text-[#4cb070]/75">野火论坛</p>
        <p className="-mr-3 font-['Liberation_Sans',sans-serif] text-base leading-5 whitespace-nowrap text-[#7cc4c4]/70">www.proewildfire.cn</p>
      </div>
    </div>
  );
}

export default function App() {
  return (
    <div className={`flex h-screen min-h-[700px] flex-col overflow-hidden border-r border-b ${LINE} bg-[#fbfbfb] font-['Liberation_Sans','Noto_Sans_CJK_SC',sans-serif]`}>
      <TitleBar />
      <TabRow />
      <Ribbon />
      <div className="flex min-h-0 flex-1">
        <Sidebar />
        <Canvas />
      </div>
      <StatusBar />
    </div>
  );
}
